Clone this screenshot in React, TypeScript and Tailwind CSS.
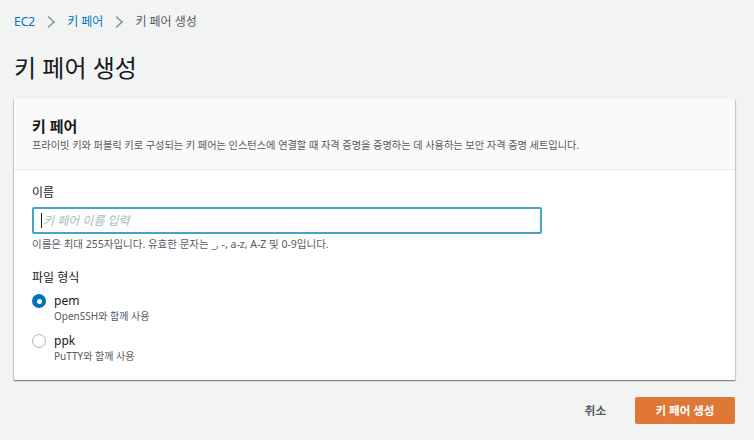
import React from "react";

const font = { fontFamily: '"Noto Sans", "Noto Sans CJK KR", sans-serif' };

function Chevron() {
  return (
    <svg width="10" height="14" viewBox="0 0 10 14" className="mx-[11px]">
      <path d="M2 1.5 L8 7 L2 12.5" fill="none" stroke="#879596" strokeWidth="1.6" />
    </svg>
  );
}

export default function App() {
  return (
    <div style={font} className="w-[754px] h-[440px] bg-[#f2f3f3] text-[#16191f] overflow-hidden">
      <div className="px-[14px] pt-[13px]">
        <div className="flex items-center text-[12px] leading-[18px]">
          <span className="text-[#0073bb]">EC2</span>
          <Chevron />
          <span className="text-[#0073bb]">키 페어</span>
          <Chevron />
          <span className="text-[#545b64]">키 페어 생성</span>
        </div>
        <h1 className="text-[24px] leading-[32px] mt-[21px] text-[#16191f]">키 페어 생성</h1>
        <div className="mt-[15px] w-[721px] bg-white shadow-[0_1px_1px_0_rgba(0,28,36,0.3),1px_1px_1px_0_rgba(0,28,36,0.15),-1px_1px_1px_0_rgba(0,28,36,0.15)]">
          <div className="bg-[#fafafa] border-b border-[#eaeded] px-[18px] pt-[16px] pb-[15px] h-[71px]">
            <div className="text-[15px] leading-[22px] font-bold">키 페어</div>
            <div className="text-[10.2px] leading-[14px] text-[#545b64] mt-[1px]">
              프라이빗 키와 퍼블릭 키로 구성되는 키 페어는 인스턴스에 연결할 때 자격 증명을 증명하는 데 사용하는 보안 자격 증명 세트입니다.
            </div>
          </div>
          <div className="px-[18px] pt-[14px] pb-[17px]">
            <div className="text-[12px] leading-[18px]">이름</div>
            <div className="mt-[5px] w-[510px] h-[27px] border-2 border-[#44a4cb] rounded-[2px] flex items-center px-[7px]">
              <span className="w-px h-[15px] bg-[#16191f]" />
              <span className="text-[12px] italic text-[#aab7b8] ml-[1px]">키 페어 이름 입력</span>
            </div>
            <div className="text-[10.5px] leading-[14px] text-[#545b64] mt-[3px]">
              이름은 최대 255자입니다. 유효한 문자는 _, -, a-z, A-Z 및 0-9입니다.
            </div>
            <div className="text-[12px] leading-[18px] mt-[18px]">파일 형식</div>
            <div className="mt-[6px] flex items-start">
              <div className="mt-[1px] w-[14px] h-[14px] rounded-full bg-[#0073bb] flex items-center justify-center">
                <div className="w-[5px] h-[5px] rounded-full bg-white" />
              </div>
              <div className="ml-[8px]">
                <div className="text-[12px] leading-[16px]">pem</div>
                <div className="text-[10px] leading-[14px] text-[#545b64]">OpenSSH와 함께 사용</div>
              </div>
            </div>
            <div className="mt-[10px] flex items-start">
              <div className="mt-[1px] w-[14px] h-[14px] rounded-full border border-[#aab7b8] bg-white" />
              <div className="ml-[8px]">
                <div className="text-[12px] leading-[16px]">ppk</div>
                <div className="text-[10px] leading-[14px] text-[#545b64]">PuTTY와 함께 사용</div>
              </div>
            </div>
          </div>
        </div>
        <div className="w-[721px] flex justify-end items-center mt-[17px]">
          <span className="text-[11.5px] font-bold text-[#545b64] mr-[29px]">취소</span>
          <div className="w-[100px] h-[27px] rounded-[2px] bg-[#df7736] text-white text-[11.5px] font-bold flex items-center justify-center">
            키 페어 생성
          </div>
        </div>
      </div>
    </div>
  );
}
